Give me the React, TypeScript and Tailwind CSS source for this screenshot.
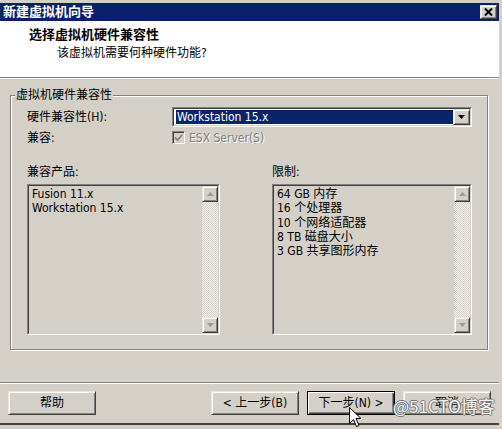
import React from "react";

const font = { fontFamily: '"DejaVu Sans Condensed", "DejaVu Sans", "Noto Sans CJK SC", sans-serif' };

function Arrow({ up, disabled }: { up?: boolean; disabled?: boolean }) {
  const fill = disabled ? "#9a9a9a" : "#000";
  return (
    <svg width="7" height="4" viewBox="0 0 7 4">
      {up ? <path d="M3.5 0 L7 4 L0 4 Z" fill={fill} /> : <path d="M0 0 L7 0 L3.5 4 Z" fill={fill} />}
    </svg>
  );
}

function RaisedBox({ className, children }: { className?: string; children?: React.ReactNode }) {
  return (
    <div
      className={
        "flex items-center justify-center bg-[#d4d0c8] border border-t-[#e6e4df] border-l-[#e6e4df] border-r-[#404040] border-b-[#404040] shadow-[inset_1px_1px_0_#fff,inset_-1px_-1px_0_#808080] " +
        (className ?? "")
      }
    >
      {children}
    </div>
  );
}

function ListBox({ items }: { items: string[] }) {
  return (
    <div className="flex h-[151px] border border-t-[#808080] border-l-[#808080] border-r-white border-b-white bg-[#d4d0c8]">
      <div className="flex flex-1 border border-t-[#404040] border-l-[#404040] border-r-[#d4d0c8] border-b-[#d4d0c8]">
        <div className="flex-1 pl-[3px] pt-[1px] text-[12px] leading-[14.25px] text-black">
          {items.map((t) => (
            <div key={t}>{t}</div>
          ))}
        </div>
        <div className="flex w-[16px] flex-col bg-[repeating-conic-gradient(#f4f3f0_0_25%,#d4d0c8_0_50%)] bg-[length:2px_2px]">
          <RaisedBox className="h-[16px] w-[16px]">
            <Arrow up disabled />
          </RaisedBox>
          <div className="flex-1" />
          <RaisedBox className="h-[16px] w-[16px]">
            <Arrow disabled />
          </RaisedBox>
        </div>
      </div>
    </div>
  );
}

function Button({ children, primary }: { children: React.ReactNode; primary?: boolean }) {
  if (primary) {
    return (
      <div className="flex h-[24px] w-[88px] items-center justify-center border border-black bg-[#d4d0c8] shadow-[inset_1px_1px_0_#fff,inset_-1px_-1px_0_#404040,inset_-2px_-2px_0_#808080] text-[12px] text-black">
        {children}
      </div>
    );
  }
  return <RaisedBox className="h-[24px] w-[88px] text-[12px] text-black">{children}</RaisedBox>;
}

export default function App() {
  return (
    <div style={font} className="relative flex h-[429px] w-[502px] flex-col overflow-hidden bg-[#d4d0c8] pt-[3px] pr-[3px]">
      {/* title bar */}
      <div className="flex h-[18px] items-center justify-between bg-[#0a216a] pl-[3px] pr-[2px]">
        <span className="text-[13px] font-bold text-white">新建虚拟机向导</span>
        <RaisedBox className="h-[14px] w-[17px]">
          <svg width="9" height="8" viewBox="0 0 9 8">
            <path d="M1 0.5 L8 7.5 M8 0.5 L1 7.5" stroke="#000" strokeWidth="2" />
          </svg>
        </RaisedBox>
      </div>

      {/* header */}
      <div className="flex h-[57px] flex-col border-b border-[#808080] bg-white pt-[6px]">
        <div className="h-[16px] pl-[29px] text-[13px] font-bold leading-[16px] text-black">选择虚拟机硬件兼容性</div>
        <div className="mt-[2px] h-[16px] pl-[57px] text-[12px] leading-[16px] text-black">该虚拟机需要何种硬件功能?</div>
      </div>
      <div className="h-px bg-white" />

      {/* body */}
      <div className="flex flex-1 flex-col">
        <div className="relative ml-[10px] mt-[16px] h-[255px] w-[478px] border border-[#808080] pl-[16px] pt-[11px] shadow-[inset_1px_1px_0_#fff,1px_1px_0_#fff]">
          <span className="absolute left-[4px] top-[-8px] bg-[#d4d0c8] px-[1px] text-[12px] leading-[14px] text-black">
            虚拟机硬件兼容性
          </span>

          <div className="flex h-[20px] items-center">
            <span className="w-[145px] text-[12px] text-black">硬件兼容性(H):</span>
            <div className="flex h-[20px] w-[300px] border border-t-[#808080] border-l-[#808080] border-r-white border-b-white">
              <div className="flex flex-1 items-center border border-t-[#404040] border-l-[#404040] border-r-[#d4d0c8] border-b-[#d4d0c8] bg-white pl-[2px]">
                <div className="flex h-[14px] flex-1 items-center bg-[#0a246a] pl-[1px] text-[12px] text-white">
                  Workstation 15.x
                </div>
                <RaisedBox className="h-[16px] w-[17px]">
                  <Arrow />
                </RaisedBox>
              </div>
            </div>
          </div>

          <div className="mt-[4px] flex h-[13px] items-center">
            <span className="w-[145px] text-[12px] text-black">兼容:</span>
            <div className="flex h-[13px] w-[13px] items-center justify-center border border-t-[#808080] border-l-[#808080] border-r-white border-b-white bg-[#d4d0c8] shadow-[inset_1px_1px_0_#404040]">
              <svg width="9" height="8" viewBox="0 0 9 8">
                <path d="M1 3.5 L3.5 6 L8 1" stroke="#808080" strokeWidth="1.8" fill="none" />
              </svg>
            </div>
            <span className="ml-[4px] text-[12px] text-[#808080] [text-shadow:1px_1px_0_#fff]">ESX Server(S)</span>
          </div>

          <div className="mt-[21px] flex gap-[52px]">
            <div className="flex w-[193px] flex-col gap-[5px]">
              <span className="h-[14px] text-[12px] leading-[14px] text-black">兼容产品:</span>
              <ListBox items={["Fusion 11.x", "Workstation 15.x"]} />
            </div>
            <div className="flex w-[200px] flex-col gap-[5px]">
              <span className="h-[14px] text-[12px] leading-[14px] text-black">限制:</span>
              <ListBox items={["64 GB 内存", "16 个处理器", "10 个网络适配器", "8 TB 磁盘大小", "3 GB 共享图形内存"]} />
            </div>
          </div>
        </div>

        <div className="mt-[32px] h-px bg-[#808080]" />
        <div className="h-px bg-white" />

        <div className="mt-[7px] flex items-center pl-[8px] pr-[8px]">
          <Button>帮助</Button>
          <div className="flex-1" />
          <div className="flex gap-[8px]">
            <Button>&lt; 上一步(B)</Button>
            <Button primary>下一步(N) &gt;</Button>
            <Button>取消</Button>
          </div>
        </div>
        <div className="flex-1" />
        <div className="h-[2px] bg-[#404040]" />
        <div className="h-[4px] bg-[#d4d0c8]" />
      </div>

      {/* watermark */}
      <span
        className="absolute left-[393px] top-[393px] text-[17px] text-[#f4f4f4] [text-shadow:1px_0_0_#777,-1px_0_0_#777,0_1px_0_#777,0_-1px_0_#777]"
        style={{ fontFamily: '"Noto Sans CJK SC", sans-serif' }}
      >
        @51CTO博客
      </span>

      {/* mouse cursor */}
      <svg className="absolute left-[349px] top-[407px]" width="13" height="21" viewBox="0 0 13 21">
        <path d="M0.5 0.5 L0.5 16.5 L4.5 12.5 L7.5 19.5 L10 18.5 L7 11.5 L12 11.5 Z" fill="#fff" stroke="#000" strokeWidth="1" />
      </svg>
    </div>
  );
}
